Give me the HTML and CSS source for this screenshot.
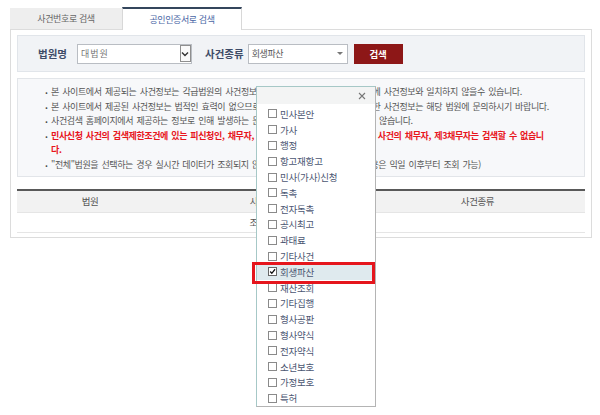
FILE: index.html
```html
<!DOCTYPE html>
<html lang="ko">
<head>
<meta charset="utf-8">
<title>사건검색</title>
<link rel="stylesheet" href="styles.css">
</head>
<body>
<div class="wrap">
  <div class="tabs">
    <div class="tab">사건번호로 검색</div>
    <div class="tab active">공인인증서로 검색</div>
  </div>
  <div class="panel">
    <div class="search">
      <span class="lbl">법원명</span>
      <div class="sel sel-court">
        <span class="val spaced">대법원</span>
        <span class="chev"><svg width="8" height="6" viewBox="0 0 8 6"><path d="M1 1.5 L4 4.5 L7 1.5" fill="none" stroke="#333" stroke-width="1.4"/></svg></span>
      </div>
      <span class="lbl lbl2">사건종류</span>
      <div class="sel sel-type">
        <span class="val">회생파산</span>
        <span class="tri"></span>
      </div>
      <button class="btn" type="button">검색</button>
    </div>
    <ul class="notice">
      <li>본 사이트에서 제공되는 사건정보는 각급법원의 사건정보시스템 자료를 기초로 하여 법원에 사건정보와 일치하지 않을수 있습니다.</li>
      <li>본 사이트에서 제공된 사건정보는 법적인 효력이 없으므로 참고용으로만 활용하시고 정확한 사건정보는 해당 법원에 문의하시기 바랍니다.</li>
      <li>사건검색 홈페이지에서 제공하는 정보로 인해 발생하는 문제에 대해서는 법적 책임을 지지 않습니다.</li>
      <li class="warn">민사신청 사건의 검색제한조건에 있는 피신청인, 채무자, 제3채무자와 부동산 등 강제집행 사건의 채무자, 제3채무자는 검색할 수 없습니<br>다.</li>
      <li>"전체"법원을 선택하는 경우 실시간 데이터가 조회되지 않을 수 있습니다(당일 변경된 내용은 익일 이후부터 조회 가능)</li>
    </ul>
    <table class="result">
      <thead>
        <tr><th class="c1">법원</th><th class="c2">사건번호</th><th class="c3">사건종류</th></tr>
      </thead>
      <tbody>
        <tr><td colspan="3">조회된 사건 결과가 없습니다.</td></tr>
      </tbody>
    </table>
  </div>
</div>

<div class="dd">
  <div class="dd-head">
    <svg class="dd-x" width="8" height="8" viewBox="0 0 8 8"><path d="M1 1 L7 7 M7 1 L1 7" stroke="#777" stroke-width="1.1" fill="none"/></svg>
  </div>
  <ul class="dd-list">
    <li><span class="cb"></span>민사본안</li>
    <li><span class="cb"></span>가사</li>
    <li><span class="cb"></span>행정</li>
    <li><span class="cb"></span>항고재항고</li>
    <li><span class="cb"></span>민사(가사)신청</li>
    <li><span class="cb"></span>독촉</li>
    <li><span class="cb"></span>전자독촉</li>
    <li><span class="cb"></span>공시최고</li>
    <li><span class="cb"></span>과태료</li>
    <li><span class="cb"></span>기타사건</li>
    <li class="on"><span class="cb"><svg width="9" height="9" viewBox="0 0 9 9"><path d="M1.5 4.5 L3.6 6.8 L7.8 1.6" fill="none" stroke="#111" stroke-width="1.6"/></svg></span>회생파산</li>
    <li><span class="cb"></span>재산조회</li>
    <li><span class="cb"></span>기타집행</li>
    <li><span class="cb"></span>형사공판</li>
    <li><span class="cb"></span>형사약식</li>
    <li><span class="cb"></span>전자약식</li>
    <li><span class="cb"></span>소년보호</li>
    <li><span class="cb"></span>가정보호</li>
    <li><span class="cb"></span>특허</li>
  </ul>
</div>
<div class="mark"></div>
</body>
</html>
```

FILE: styles.css
```css
* { box-sizing: border-box; margin: 0; padding: 0; }

body {
  width: 600px;
  height: 415px;
  overflow: hidden;
  position: relative;
  background: #fff;
  font-family: "Noto Sans CJK KR", "Noto Sans", sans-serif;
  color: #555;
  font-size: 9px;
  letter-spacing: -0.4px;
}

.wrap { padding: 7px 8px 0 10px; }

/* tabs */
.tabs {
  display: flex;
  align-items: flex-end;
  height: 22px;
}
.tab {
  height: 21px;
  width: 112px;
  background: #eeeeee;
  color: #666;
  display: flex;
  align-items: center;
  justify-content: center;
  font-size: 9px;
}
.tab.active {
  width: 120px;
  height: 23px;
  margin-bottom: -1px;
  background: #fff;
  color: #4a67a6;
  border-top: 2px solid #34465c;
  border-left: 1px solid #d8d8d8;
  border-right: 1px solid #d8d8d8;
  position: relative;
  z-index: 1;
}

/* panel */
.panel {
  width: 582px;
  height: 209px;
  border: 1px solid #dcdcdc;
  padding: 5px 6px;
}

.search {
  height: 37px;
  background: #f1f3f6;
  border: 1px solid #e1e5ea;
  display: flex;
  align-items: center;
  padding-left: 20px;
}
.lbl {
  font-size: 10.5px;
  font-weight: bold;
  color: #3e4c68;
  letter-spacing: 0;
  margin-right: 10px;
}
.lbl2 { margin-left: 13px; margin-right: 4px; }

.sel {
  height: 20px;
  background: #fff;
  border: 1px solid #b9bdc3;
  display: flex;
  align-items: center;
  justify-content: space-between;
  padding-left: 3px;
}
.sel-court { width: 115px; }
.sel-type { width: 100px; padding-right: 4px; }
.val { color: #555; font-size: 9px; }
.spaced { letter-spacing: 1px; color: #777; }
.chev {
  width: 11px;
  height: 17px;
  border: 1px solid #8f8f8f;
  display: flex;
  align-items: center;
  justify-content: center;
  background: #fafafa;
}
.tri {
  width: 0; height: 0;
  border-left: 3px solid transparent;
  border-right: 3px solid transparent;
  border-top: 3px solid #777;
}
.btn {
  margin-left: 6px;
  width: 49px;
  height: 20px;
  border: 0;
  background: #8d1717;
  color: #fff;
  font-family: inherit;
  font-size: 9.5px;
  font-weight: bold;
  letter-spacing: 0;
}

/* notice */
.notice {
  list-style: none;
  margin-top: 6px;
  height: 99px;
  background: #f7f8fa;
  border: 1px solid #e2e5e9;
  padding: 6px 0 0 33px;
  line-height: 14.6px;
  white-space: nowrap;
  word-spacing: 1.2px;
  color: #555;
}
.notice li { position: relative; }
.notice li::before {
  content: ".";
  position: absolute;
  left: -6px;
  top: -1px;
  font-weight: bold;
  color: #444;
}
.notice li.warn { color: #e8151c; font-weight: bold; }

/* result table */
.result {
  margin-top: 12px;
  width: 568px;
  border-collapse: collapse;
  border-top: 2px solid #595959;
}
.result th {
  height: 22px;
  background: #f2f2f2;
  border-bottom: 1px solid #e5e5e5;
  font-weight: normal;
  color: #555;
  font-size: 9.5px;
}
.c1 { width: 146px; }
.c2 { width: 207px; }
.c3 { width: 215px; }
.result td {
  height: 20px;
  text-align: center;
  border-bottom: 1px solid #e5e5e5;
  font-size: 9px;
}

/* dropdown overlay */
.dd {
  position: absolute;
  left: 256px;
  top: 86px;
  width: 120px;
  height: 321px;
  background: #fff;
  border: 1px solid #a6c8c7;
  border-right-color: #b4b4b4;
  border-bottom-color: #b4b4b4;
  z-index: 5;
}
.dd-head {
  height: 17px;
  background: #f3f4f4;
  position: relative;
}
.dd-x { position: absolute; right: 9px; top: 5px; }
.dd-list {
  list-style: none;
  padding-top: 2px;
}
.dd-list li {
  height: 15.8px;
  display: flex;
  align-items: center;
  padding-left: 11px;
  color: #4b5672;
  font-size: 9.5px;
  letter-spacing: -0.2px;
}
.dd-list li.on { background: #dfeaee; }
.cb {
  width: 9px;
  height: 9px;
  border: 1px solid #8a8a8a;
  background: #fff;
  margin-right: 3px;
  display: flex;
  align-items: center;
  justify-content: center;
}
.dd-list li.on .cb { border-color: #666; }
.cb svg { display: block; }

/* annotation box */
.mark {
  position: absolute;
  left: 252px;
  top: 262px;
  width: 123px;
  height: 22px;
  border: 3px solid #e5161d;
  z-index: 6;
}
```
